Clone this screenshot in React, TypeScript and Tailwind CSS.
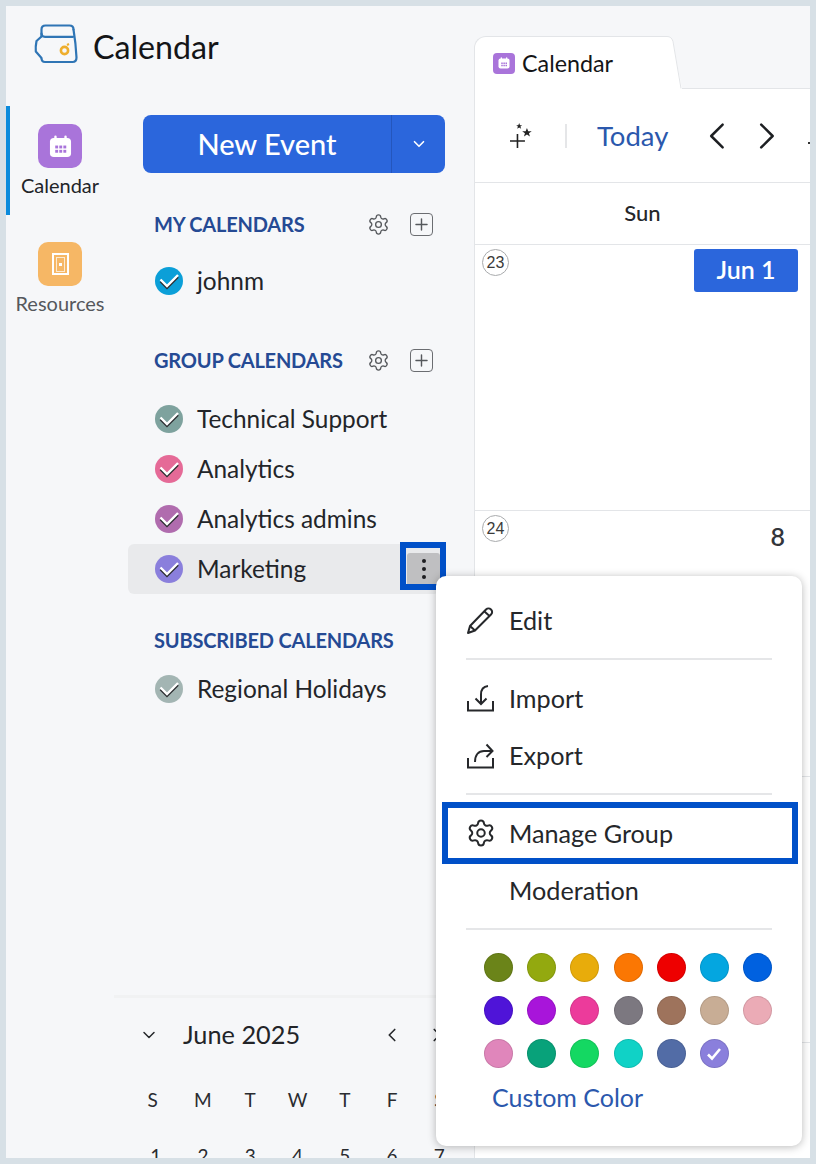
import React from 'react';
import { ChevronDown, ChevronLeft, ChevronRight, Plus, Settings } from 'lucide-react';

const FONT = "font-['Lato','Noto_Sans',sans-serif]";

const groupCalendars = [
  { name: 'Technical Support', color: '#7ea29e' },
  { name: 'Analytics', color: '#e56a97' },
  { name: 'Analytics admins', color: '#b06cae' },
];

const swatches = [
  ['#6b8419', '#93a90f', '#e8ac0b', '#fb7703', '#ee0000', '#04a6e0', '#0061e0'],
  ['#4f14d8', '#a815da', '#ec3b9b', '#7c7880', '#9e735c', '#c8ad95', '#ebabb6'],
  ['#e086bb', '#08a27a', '#14d862', '#10d2c6', '#526ca6', '#8a7fdc'],
];

const weekDays = ['S', 'M', 'T', 'W', 'T', 'F', 'S'];
const monthDays = [1, 2, 3, 4, 5, 6, 7];

const CheckDot = ({ color }: { color: string }) => (
  <svg width="28" height="28" viewBox="0 0 28 28" className="shrink-0">
    <circle cx="14" cy="14" r="14" fill={color} />
    <path d="M5.500 14.500l6.500 6.500L23 10" fill="none" stroke="#2b2d31" strokeWidth="2.200" />
    <path d="M5.500 12.500l6.500 6.500L23 8" fill="none" stroke="#fff" strokeWidth="2.400" />
  </svg>
);

const Logo = () => (
  <svg width="44" height="40" viewBox="0 0 44 40" fill="none" className="shrink-0">
    <path d="M7.500 12.500V5.500c0-2.500 1.500-4 4-4h24c2.500 0 4 1.500 4 4" stroke="#2f75b5" strokeWidth="2.200" strokeLinecap="round" />
    <path d="M7.500 9.500c0 2 1.300 3.300 3.500 3.300h28" stroke="#2f75b5" strokeWidth="2.200" strokeLinecap="round" />
    <path d="M39.500 5.500c1.500 9 2.500 18 3 28 0 2.800-1.500 4.500-4 4.500H11c-2.500 0-3.500-1.500-3.500-4" stroke="#2f75b5" strokeWidth="2.200" strokeLinecap="round" />
    <path d="M7.500 12.500L2.500 17c-.8 4-1 7-.7 10.500l5.700 6.500" stroke="#2f75b5" strokeWidth="2.200" strokeLinejoin="round" />
    <circle cx="30.500" cy="26.500" r="3.600" stroke="#eeae2c" strokeWidth="2.600" />
    <path d="M33 21l2-1" stroke="#eeae2c" strokeWidth="2" />
  </svg>
);

const CalendarGlyph = ({ size }: { size: number }) => (
  <svg width={size} height={size} viewBox="0 0 24 24">
    <rect x="1" y="3" width="22" height="20" rx="4" fill="#fff" />
    <rect x="5.500" y="0.500" width="2.500" height="5" rx="1.200" fill="#fff" />
    <rect x="16" y="0.500" width="2.500" height="5" rx="1.200" fill="#fff" />
    {[6.500, 10.750, 15].map(x =>
      [11, 15.500].map(y => <rect key={`${x}-${y}`} x={x} y={y} width="3" height="3" fill="#a974da" />)
    )}
  </svg>
);

const PencilIcon = () => (
  <svg width="29" height="29" viewBox="0 0 29 29" fill="none" stroke="#26282b" strokeWidth="2" strokeLinejoin="round">
    <path d="M2 27l2-7L20 3.500c1.500-1.500 3.500-1.500 5 0s1.500 3.500 0 5L9 24.500z" />
    <path d="M18.500 5.500l5 4.500" />
    <path d="M4 20l5 4.500" />
  </svg>
);

const ImportIcon = () => (
  <svg width="29" height="29" viewBox="0 0 29 29" fill="none" stroke="#26282b" strokeWidth="2">
    <path d="M2 17v9.500h25V17" />
    <path d="M22 2c-4 .5-7 3.500-7 8.500V20" />
    <path d="M9.500 14.500L15 20l5.500-5.500" />
  </svg>
);

const ExportIcon = () => (
  <svg width="29" height="29" viewBox="0 0 29 29" fill="none" stroke="#26282b" strokeWidth="2">
    <path d="M2 17v9.500h25V17" />
    <path d="M9 21c0-7 3.500-11 9-11h8" />
    <path d="M20.500 3.500L26.500 10l-6 6" />
  </svg>
);

const SparklePlus = () => (
  <svg width="24" height="26" viewBox="0 0 24 26" fill="#222">
    <path d="M8.500 11v14M1 18h15" stroke="#222" strokeWidth="1.600" fill="none" />
    <path d="M12 0l1 2.500h2.500l-2 1.600.8 2.500L12 5.200l-2.300 1.400.8-2.500-2-1.600H11z" transform="scale(.85)" />
    <path d="M18 5l1.300 3.300h3.500l-2.800 2 1 3.300-3-2-3 2 1-3.300-2.800-2h3.500z" />
  </svg>
);

const MenuItem = ({ icon, label, className }: { icon?: React.ReactNode; label: string; className: string }) => (
  <div className={`flex items-center ${className}`}>
    <div className="w-[43px] shrink-0 flex items-center">{icon}</div>
    <span className="mt-[2px] text-[25.200px] leading-none text-[#25272a]">{label}</span>
  </div>
);

const SectionHeading = ({ label, className, actions }: { label: string; className: string; actions?: boolean }) => (
  <div className={`flex items-center h-[32px] pl-[40px] pr-[41px] ${className}`}>
    <span className="text-[20px] font-bold text-[#254a94] tracking-[-0.2px] whitespace-nowrap">{label}</span>
    {actions && (
      <div className="ml-auto flex items-center gap-[20px]">
        <Settings size={23} strokeWidth={1.400} className="text-[#55585c]" />
        <div className="w-[23px] h-[23px] border border-[#6b6d71] rounded-[4px] flex items-center justify-center">
          <Plus size={19} strokeWidth={1.800} className="text-[#55585c]" />
        </div>
      </div>
    )}
  </div>
);

const CalendarRow = ({ name, color, active }: { name: string; color: string; active?: boolean }) => (
  <div className={`flex items-center h-[50px] ml-[14px] mr-[34px] pl-[27px] rounded-[6px] ${active ? 'bg-[#e9eaec]' : ''}`}>
    <CheckDot color={color} />
    <span className="ml-[14px] text-[24.400px] leading-none text-[#232529] whitespace-nowrap">{name}</span>
    {active && (
      <div className="ml-auto w-[33px] h-[33px] bg-[#bfbfc1] rounded-[3px] flex flex-col items-center justify-center gap-[4px]">
        <i className="block w-[4px] h-[4px] rounded-full bg-[#1d1d1f]" />
        <i className="block w-[4px] h-[4px] rounded-full bg-[#1d1d1f]" />
        <i className="block w-[4px] h-[4px] rounded-full bg-[#1d1d1f]" />
      </div>
    )}
  </div>
);

const DayBadge = ({ day }: { day: number }) => (
  <div className="w-[27px] h-[27px] rounded-full border border-[#a9abad] bg-white flex items-center justify-center font-['Liberation_Sans',sans-serif] text-[16px] text-[#3a3a3a]">
    {day}
  </div>
);

export default function App() {
  return (
    <div className={`w-[816px] h-[1164px] bg-[#d7e0e6] p-[6px] overflow-hidden ${FONT}`}>
      <div className="relative flex w-full h-full bg-[#f6f7f9] overflow-hidden">
        {/* left column */}
        <div className="w-[468px] shrink-0 flex flex-col">
          <div className="h-[100px] shrink-0 flex items-start pl-[28px] pt-[18px]">
            <Logo />
            <span className="ml-[15px] mt-[3px] text-[32.200px] leading-[40px] text-[#141517]">Calendar</span>
          </div>

          <div className="flex flex-1 min-h-0">
            {/* app rail */}
            <div className="w-[108px] shrink-0 flex flex-col">
              <div className="h-[109px] border-l-[4px] border-[#0b8bdc] flex flex-col items-center pt-[18px] pr-[4px]">
                <div className="w-[44px] h-[44px] rounded-[10px] bg-[#a974da] flex items-center justify-center">
                  <CalendarGlyph size={23} />
                </div>
                <span className="mt-[6px] text-[20px] leading-[22px] text-[#222428]">Calendar</span>
              </div>
              <div className="flex flex-col items-center pt-[27px]">
                <div className="w-[44px] h-[44px] rounded-[10px] bg-[#f6b765] flex items-center justify-center">
                  <div className="w-[17px] h-[22px] border-[2px] border-white flex items-center justify-center">
                    <div className="w-[9px] h-[15px] border border-white/70 flex items-center justify-center">
                      <i className="block w-[3px] h-[3px] bg-white" />
                    </div>
                  </div>
                </div>
                <span className="mt-[6px] text-[20px] leading-[22px] text-[#55585c]">Resources</span>
              </div>
            </div>

            {/* sidebar */}
            <div className="w-[360px] shrink-0 flex flex-col">
              <div className="mt-[9px] ml-[29px] w-[302px] h-[58px] shrink-0 rounded-[8px] bg-[#2b66dc] flex text-white">
                <div className="w-[249px] flex items-center justify-center text-[29px] font-medium border-r border-[#2456bd]">New Event</div>
                <div className="flex-1 flex items-center justify-center">
                  <ChevronDown size={18} strokeWidth={2.200} />
                </div>
              </div>

              <SectionHeading label="MY CALENDARS" className="mt-[35px]" actions />
              <div className="mt-[16px]">
                <CalendarRow name="johnm" color="#0b9fd8" />
              </div>

              <SectionHeading label="GROUP CALENDARS" className="mt-[38px]" actions />
              <div className="mt-[18px]">
                {groupCalendars.map(c => (
                  <CalendarRow key={c.name} name={c.name} color={c.color} />
                ))}
                <CalendarRow name="Marketing" color="#8a7fdc" active />
              </div>

              <SectionHeading label="SUBSCRIBED CALENDARS" className="mt-[30px]" />
              <div className="mt-[8px]">
                <CalendarRow name="Regional Holidays" color="#a3b5b3" />
              </div>

              {/* mini calendar */}
              <div className="mt-auto h-[163px] shrink-0 border-t-[3px] border-[#f1f2f3] overflow-hidden">
                <div className="flex items-center h-[34px] mt-[20px] pl-[25px] pr-[26px]">
                  <ChevronDown size={20} strokeWidth={1.800} className="text-[#26282b]" />
                  <span className="ml-[24px] text-[25.300px] leading-none text-[#222428]">June 2025</span>
                  <div className="ml-auto flex items-center gap-[29px] text-[#26282b]">
                    <ChevronLeft size={22} strokeWidth={1.800} />
                    <ChevronRight size={22} strokeWidth={1.800} className="-ml-[6px]" />
                  </div>
                </div>
                <div className="grid grid-cols-7 w-[331px] ml-[18px] mt-[37px] text-[19px] text-[#2a2c30] text-center">
                  {weekDays.map((d, i) => (
                    <span key={i} className={`leading-[22px] ${i === 0 ? '-ml-[6px]' : ''}`}>{d}</span>
                  ))}
                </div>
                <div className="grid grid-cols-7 w-[331px] ml-[18px] mt-[34px] text-[19px] text-[#2a2c30] text-center">
                  {monthDays.map(d => (
                    <span key={d} className="leading-[22px]">{d}</span>
                  ))}
                </div>
              </div>
            </div>
          </div>
        </div>

        {/* main calendar */}
        <div className="flex-1 min-w-0 flex flex-col pt-[30px]">
          <div className="flex h-[53px] shrink-0">
            <div className="w-[190px] shrink-0 bg-white rounded-tl-[12px] border-t border-l border-[#e3e5e8] flex items-center pl-[18px]">
              <div className="w-[22px] h-[21px] rounded-[4px] bg-[#a974da] flex items-center justify-center">
                <CalendarGlyph size={12} />
              </div>
              <span className="ml-[7px] mt-[2px] text-[23.300px] leading-none text-[#141517]">Calendar</span>
            </div>
            <svg width="18" height="53" viewBox="0 0 18 53" className="shrink-0">
              <path d="M0 0.500h3c3 0 5 1.500 6 5L18 53H0z" fill="#fff" />
              <path d="M0 0.500h3c3 0 5 1.500 6 5L17 52.500" fill="none" stroke="#e3e5e8" />
            </svg>
            <div className="flex-1 border-b border-[#e3e5e8]" />
          </div>

          <div className="flex-1 min-h-0 bg-white border-l border-[#e3e5e8] flex flex-col">
            <div className="h-[94px] shrink-0 flex items-center border-b border-[#e3e5e8] pl-[34px]">
              <SparklePlus />
              <div className="ml-[32px] w-[2px] h-[24px] bg-[#e5e6e8]" />
              <span className="ml-[30px] text-[27.500px] leading-none text-[#2b58ad]">Today</span>
              <ChevronLeft size={46} strokeWidth={1.300} className="ml-[26px] text-[#1d1f22]" />
              <ChevronRight size={46} strokeWidth={1.300} className="ml-[4px] text-[#1d1f22]" />
              <i className="block ml-[18px] mt-[14px] w-[2px] h-[2px] bg-[#333]" />
            </div>
            <div className="h-[62px] shrink-0 pb-[2px] flex items-center justify-center border-b border-[#e3e5e8] text-[22px] font-medium text-[#25272a]">Sun</div>

            <div className="h-[266px] shrink-0 border-b border-[#e3e5e8] pt-[4px] pl-[7px] pr-[12px] flex items-start justify-between">
              <DayBadge day={23} />
              <div className="w-[104px] h-[43px] pb-[2px] rounded-[3px] bg-[#2b66dc] text-white text-[25px] font-semibold flex items-center justify-center">Jun 1</div>
            </div>
            <div className="h-[266px] shrink-0 border-b border-[#e3e5e8] pt-[4px] pl-[7px] pr-[25px] flex items-start justify-between">
              <DayBadge day={24} />
              <span className="mt-[6px] text-[25px] leading-[30px] font-semibold text-[#33353a]">8</span>
            </div>
            <div className="h-[266px] shrink-0 border-b border-[#e3e5e8]" />
          </div>
        </div>

        {/* kebab callout */}
        <div className="absolute left-[394px] top-[536px] w-[46px] h-[48px] border-[6px] border-[#0050c8]" />

        {/* group menu */}
        <div className="absolute left-[430px] top-[570px] w-[366px] h-[570px] bg-white rounded-[10px] shadow-[0_1px_8px_rgba(0,0,0,0.28)] flex flex-col pt-[26px]">
          <MenuItem icon={<PencilIcon />} label="Edit" className="h-[36px] pl-[30px]" />
          <div className="mx-[30px] mt-[20px] h-[2px] bg-[#e5e6e8]" />
          <MenuItem icon={<ImportIcon />} label="Import" className="h-[36px] pl-[30px] mt-[20px]" />
          <MenuItem icon={<ExportIcon />} label="Export" className="h-[36px] pl-[30px] mt-[21px]" />
          <div className="mx-[30px] mt-[20px] h-[2px] bg-[#e5e6e8]" />
          <MenuItem icon={<Settings size={30} strokeWidth={1.600} className="text-[#26282b]" />} label="Manage Group" className="h-[36px] pl-[30px] mt-[20px]" />
          <MenuItem label="Moderation" className="h-[36px] pl-[30px] mt-[21px]" />
          <div className="mx-[30px] mt-[20px] h-[2px] bg-[#e5e6e8]" />

          <div className="mt-[23px] pl-[48px] flex flex-col gap-[14px]">
            {swatches.map((row, r) => (
              <div key={r} className="flex gap-[14.200px]">
                {row.map(color => (
                  <div
                    key={color}
                    className="w-[29px] h-[29px] rounded-full border border-black/10 flex items-center justify-center"
                    style={{ backgroundColor: color }}
                  >
                    {color === '#8a7fdc' && (
                      <svg width="16" height="14" viewBox="0 0 16 14" fill="none" stroke="#fff" strokeWidth="2.600">
                        <path d="M2 7.500l4 4L14 2" />
                      </svg>
                    )}
                  </div>
                ))}
              </div>
            ))}
          </div>
          <span className="mt-[13px] ml-[56px] text-[25px] leading-[32px] text-[#2b58ad]">Custom Color</span>

          {/* manage group callout */}
          <div className="absolute left-[6px] top-[226px] w-[356px] h-[62px] border-[6px] border-[#0050c8]" />
        </div>
      </div>
    </div>
  );
}
